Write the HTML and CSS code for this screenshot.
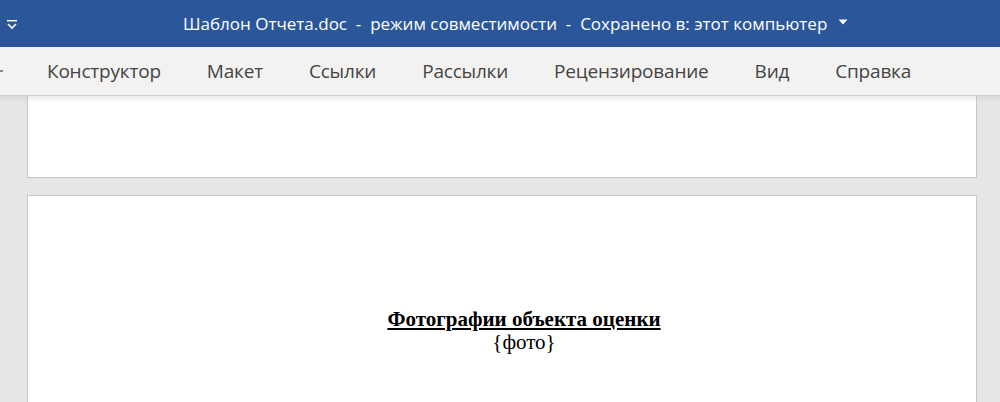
FILE: index.html
```html
<!DOCTYPE html>
<html lang="ru">
<head>
<meta charset="utf-8">
<link rel="stylesheet" href="styles.css">
</head>
<body>
<header class="titlebar">
  <svg class="qat" width="12" height="10" viewBox="0 0 12 10"><rect x="1" y="0" width="10" height="1.4" fill="#fff"/><path d="M2 4 L6 8 L10 4" fill="none" stroke="#fff" stroke-width="1.6"/></svg>
  <div class="title">Шаблон Отчета.doc&nbsp; - &nbsp;режим совместимости&nbsp; - &nbsp;Сохранено в: этот компьютер</div>
  <svg class="caret" width="10" height="6" viewBox="0 0 10 6"><path d="M0.5 0.5 L9.5 0.5 L5 5.5 Z" fill="#fff"/></svg>
</header>
<nav class="ribbon">
  <span class="edge"></span>
  <span class="tab">Конструктор</span>
  <span class="tab">Макет</span>
  <span class="tab">Ссылки</span>
  <span class="tab">Рассылки</span>
  <span class="tab">Рецензирование</span>
  <span class="tab">Вид</span>
  <span class="tab">Справка</span>
</nav>
<main class="canvas">
  <div class="page page-top"></div>
  <div class="page page-main">
    <p class="heading">Фотографии объекта оценки</p>
    <p class="line">{фото}</p>
  </div>
</main>
</body>
</html>
```
FILE: styles.css
```css
html, body {
  margin: 0;
  padding: 0;
  width: 1000px;
  height: 402px;
  overflow: hidden;
  background: #e6e6e6;
}
.titlebar {
  height: 47px;
  background: #2b579a;
  display: flex;
  align-items: center;
  color: #fff;
  font-family: "Open Sans", "Noto Sans", sans-serif;
  font-size: 17px;
}
.qat {
  margin-left: 6px;
  margin-top: 2px;
}
.title {
  margin-left: 165px;
  white-space: pre;
  letter-spacing: 0;
}
.caret {
  margin-left: 11px;
  margin-top: -3px;
}
.ribbon {
  background: #f3f2f1;
  border-bottom: 1px solid #d2d0ce;
  display: flex;
  align-items: center;
  font-family: "Open Sans", "Noto Sans", sans-serif;
  font-size: 19px;
  color: #444;
  box-sizing: border-box;
  height: 49px;
}
.edge {
  width: 47px;
  height: 2px;
  align-self: center;
  margin-left: -44px;
  margin-right: 44px;
  background: linear-gradient(90deg, transparent 40px, #888 40px, #888 47px);
  display: block;
  flex: none;
}
.tab {
  margin-right: 46px;
  letter-spacing: -0.2px;
}
.canvas {
  display: flex;
  flex-direction: column;
  gap: 17px;
  padding-left: 27px;
  background: linear-gradient(#d8d8d8, #e6e6e6 6px);
}
.page {
  width: 950px;
  background: #fff;
  border: 1px solid #c6c6c6;
  box-sizing: border-box;
}
.page-top {
  height: 82px;
  border-top: none;
  background: linear-gradient(#ececec, #fff 6px);
}
.page-main {
  height: 220px;
  padding-top: 112px;
  padding-left: 44px;
  font-family: "Liberation Serif", "DejaVu Serif", serif;
  font-size: 21px;
  color: #000;
  text-align: center;
}
.heading {
  margin: 0;
  font-weight: bold;
  text-decoration: underline;
  line-height: 23px;
}
.line {
  margin: 0;
  line-height: 23px;
}
```
